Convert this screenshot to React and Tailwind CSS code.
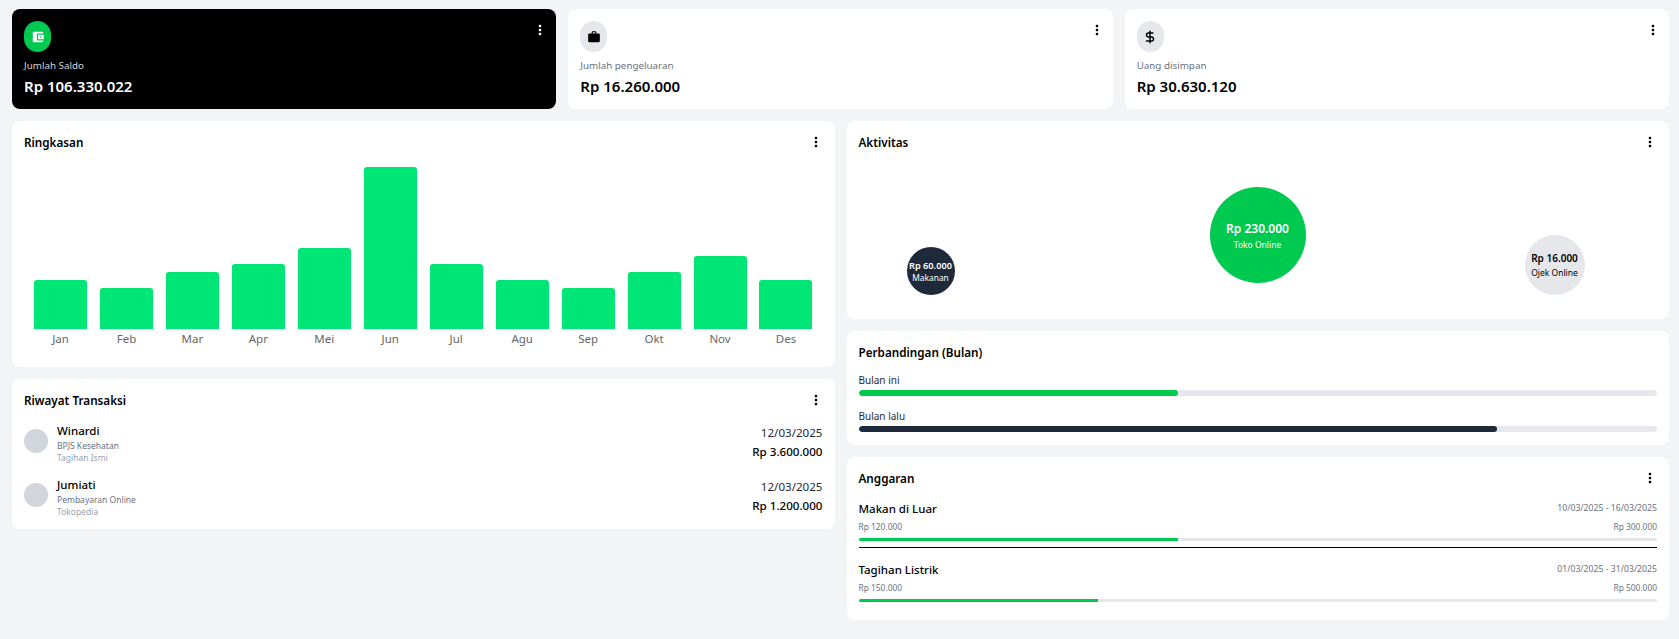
import React from "react";
import { DollarSign } from "lucide-react";
import { MdAccountBalanceWallet, MdMoreVert, MdWork } from "react-icons/md";

const months = [
  { label: "Jan", height: 49 },
  { label: "Feb", height: 41 },
  { label: "Mar", height: 57 },
  { label: "Apr", height: 65 },
  { label: "Mei", height: 81 },
  { label: "Jun", height: 162 },
  { label: "Jul", height: 65 },
  { label: "Agu", height: 49 },
  { label: "Sep", height: 41 },
  { label: "Okt", height: 57 },
  { label: "Nov", height: 73 },
  { label: "Des", height: 49 },
];

const transactions = [
  { name: "Winardi", type: "BPJS Kesehatan", note: "Tagihan Ismi", date: "12/03/2025", amount: "Rp 3.600.000" },
  { name: "Jumiati", type: "Pembayaran Online", note: "Tokopedia", date: "12/03/2025", amount: "Rp 1.200.000" },
];

const Dots = ({ className = "text-black" }) => (
  <MdMoreVert className={`w-4 h-4 ${className}`} />
);

const StatCard = ({ icon, label, value, dark }) => (
  <div className={`flex-1 h-[100px] rounded-lg p-3 flex justify-between ${dark ? "bg-black" : "bg-white"}`}>
    <div className="flex flex-col">
      <div className={`w-[27px] h-[31px] rounded-full flex items-center justify-center ${dark ? "bg-[#00c950] text-white" : "bg-gray-200 text-black"}`}>
        {icon}
      </div>
      <p className={`mt-[7px] text-[9.8px] leading-[14px] ${dark ? "text-gray-300" : "text-gray-500"}`}>{label}</p>
      <p className={`mt-[3px] text-[15px] leading-[20px] font-semibold ${dark ? "text-white" : "text-black"}`}>{value}</p>
    </div>
    <div className="mt-[1px] mr-[-4px]">
      <Dots className={dark ? "text-white" : "text-black"} />
    </div>
  </div>
);

const CardTitle = ({ title, menu = true }) => (
  <div className="flex justify-between items-start h-[20px]">
    <h2 className="text-[11.7px] leading-[18px] font-semibold text-black">{title}</h2>
    {menu && <Dots className="text-black mt-[1px] mr-[-1px]" />}
  </div>
);

const ProgressRow = ({ label, percent, color }) => (
  <div>
    <p className="text-[10px] leading-[14px] text-gray-800">{label}</p>
    <div className="mt-[3px] h-[6px] rounded-full bg-gray-200 overflow-hidden">
      <div className={`h-full rounded-full ${color}`} style={{ width: `${percent}%` }} />
    </div>
  </div>
);

const BudgetRow = ({ title, range, spent, limit, percent }) => (
  <div>
    <div className="flex justify-between items-center h-[16px]">
      <p className="text-[11.5px] font-medium text-black">{title}</p>
      <p className="text-[8.7px] text-gray-500">{range}</p>
    </div>
    <div className="mt-[3px] flex justify-between items-center h-[14px] text-[8.4px] text-gray-500">
      <span>{spent}</span>
      <span>{limit}</span>
    </div>
    <div className="mt-[4px] h-[3px] rounded-full bg-gray-200 overflow-hidden">
      <div className="h-full bg-[#00c950]" style={{ width: `${percent}%` }} />
    </div>
  </div>
);

const App = () => {
  return (
    <div className="min-h-[639px] bg-gray-100 pl-3 pr-[10px] pt-[9px] pb-[19px] font-['Noto_Sans',sans-serif]">
      <div className="flex gap-3">
        <StatCard dark icon={<MdAccountBalanceWallet className="w-[14px] h-[14px]" />} label="Jumlah Saldo" value="Rp 106.330.022" />
        <StatCard icon={<MdWork className="w-[14px] h-[14px]" />} label="Jumlah pengeluaran" value="Rp 16.260.000" />
        <StatCard icon={<DollarSign className="w-[14px] h-[14px]" strokeWidth={2.5} />} label="Uang disimpan" value="Rp 30.630.120" />
      </div>

      <div className="mt-3 grid grid-cols-2 gap-3 items-start">
        <div className="flex flex-col gap-3">
          <div className="h-[246px] bg-white rounded-lg p-3">
            <CardTitle title="Ringkasan" />
            <div className="mt-[14px] px-[10px] flex justify-between items-end h-[162px]">
              {months.map((m) => (
                <div key={m.label} className="w-[53px] bg-[#00e676] rounded-t-[3px]" style={{ height: m.height }} />
              ))}
            </div>
            <div className="mt-[2px] px-[10px] flex justify-between">
              {months.map((m) => (
                <span key={m.label} className="w-[53px] text-center text-[11.5px] leading-[16px] text-[#666]">{m.label}</span>
              ))}
            </div>
          </div>

          <div className="h-[150px] bg-white rounded-lg p-3">
            <CardTitle title="Riwayat Transaksi" />
            <div className="mt-2 flex flex-col gap-[10px]">
              {transactions.map((t) => (
                <div key={t.name} className="h-[44px] flex justify-between items-center">
                  <div className="flex items-center gap-[9px]">
                    <div className="w-6 h-6 rounded-full bg-gray-300" />
                    <div className="flex flex-col mt-1">
                      <p className="text-[11.5px] leading-[16px] font-medium text-black">{t.name}</p>
                      <p className="text-[8.5px] leading-[13px] text-gray-500">{t.type}</p>
                      <p className="text-[8.5px] leading-[12px] text-gray-400">{t.note}</p>
                    </div>
                  </div>
                  <div className="text-right mt-[3px]">
                    <p className="text-[11.6px] leading-[18px] text-gray-800">{t.date}</p>
                    <p className="text-[11.6px] leading-[19px] font-medium text-black">{t.amount}</p>
                  </div>
                </div>
              ))}
            </div>
          </div>
        </div>

        <div className="flex flex-col gap-3">
          <div className="h-[198px] bg-white rounded-lg p-3">
            <CardTitle title="Aktivitas" />
            <div className="mt-[14px] pl-[48px] flex items-end h-[128px]">
              <div className="w-12 h-12 rounded-full bg-[#1e2939] text-white flex flex-col items-center justify-center">
                <p className="text-[9.2px] leading-[13px] font-semibold">Rp 60.000</p>
                <p className="text-[8.4px] leading-[12px]">Makanan</p>
              </div>
              <div className="ml-[255px] mb-[12px] pt-[3px] w-24 h-24 rounded-full bg-[#00c950] text-white flex flex-col items-center justify-center">
                <p className="text-xs leading-[16px] font-semibold">Rp 230.000</p>
                <p className="text-[8.5px] leading-[16px]">Toko Online</p>
              </div>
              <div className="ml-[219px] w-[60px] h-[60px] rounded-full bg-gray-200 text-black flex flex-col items-center justify-center">
                <p className="text-[10px] leading-[14px] font-semibold">Rp 16.000</p>
                <p className="text-[8.5px] leading-[15px]">Ojek Online</p>
              </div>
            </div>
          </div>

          <div className="h-[114px] bg-white rounded-lg p-3">
            <CardTitle title="Perbandingan (Bulan)" menu={false} />
            <div className="mt-[10px] flex flex-col gap-[13px]">
              <ProgressRow label="Bulan ini" percent={40} color="bg-[#00c950]" />
              <ProgressRow label="Bulan lalu" percent={80} color="bg-[#1e2939]" />
            </div>
          </div>

          <div className="h-[163px] bg-white rounded-lg p-3">
            <CardTitle title="Anggaran" />
            <div className="mt-3">
              <BudgetRow title="Makan di Luar" range="10/03/2025 - 16/03/2025" spent="Rp 120.000" limit="Rp 300.000" percent={40} />
              <div className="mt-[6px] mb-[14px] h-px bg-black" />
              <BudgetRow title="Tagihan Listrik" range="01/03/2025 - 31/03/2025" spent="Rp 150.000" limit="Rp 500.000" percent={30} />
            </div>
          </div>
        </div>
      </div>
    </div>
  );
};

export default App;
